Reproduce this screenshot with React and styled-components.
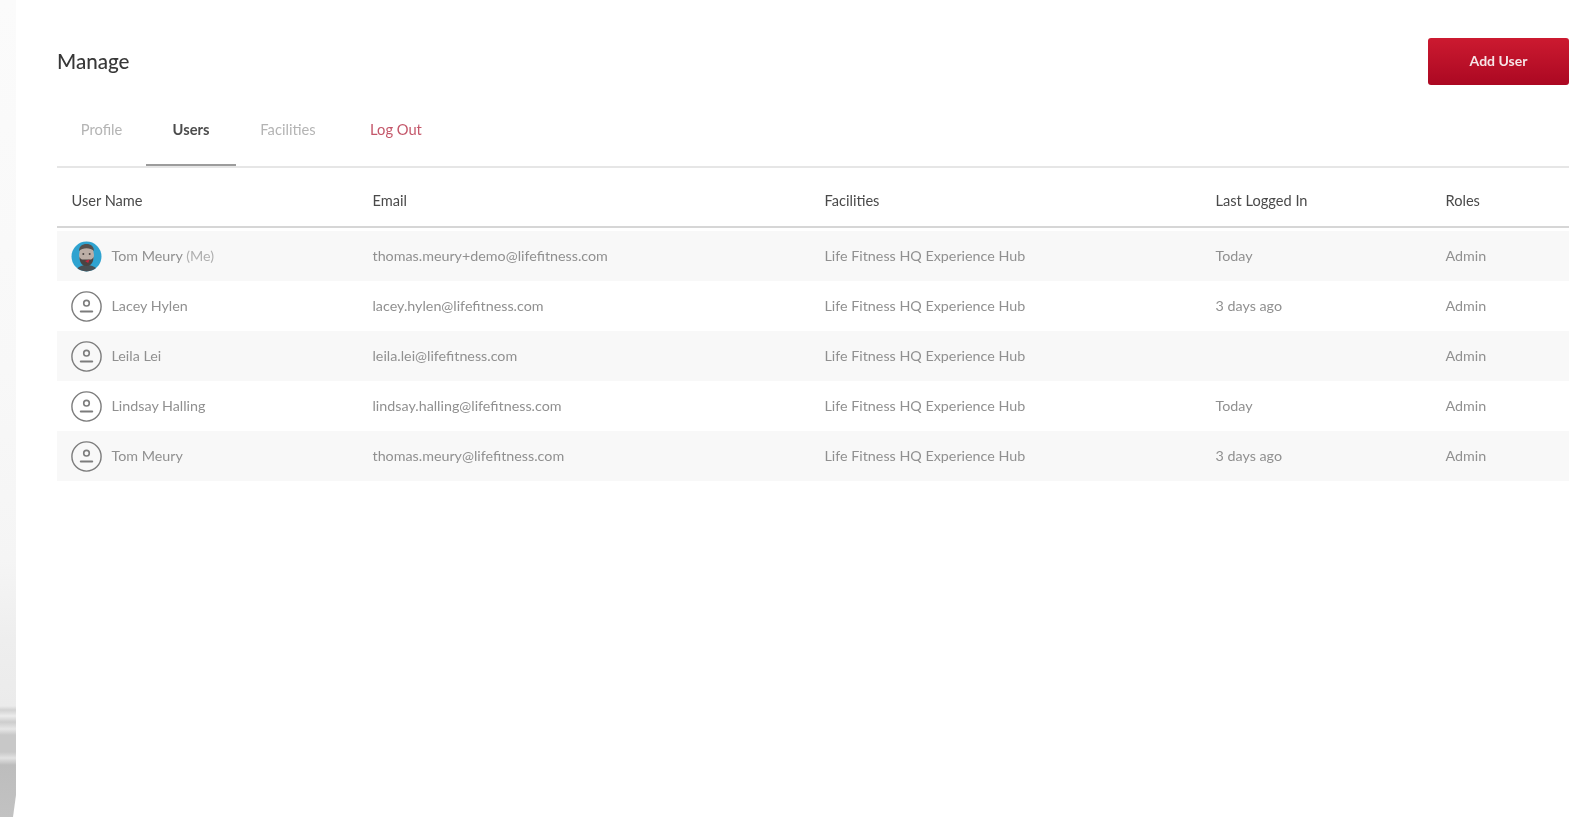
import React from "react"
import styled, { createGlobalStyle } from "styled-components"

const Global = createGlobalStyle`
    html, body {
        margin: 0;
        padding: 0;
        background: #fff;
        font-family: "Lato", "Open Sans", sans-serif;
    }
`;

const Page = styled.div`
    display: flex;
    min-height: 817px;
    overflow: hidden;
`;

const SideStrip = styled.aside`
    width: 16px;
    flex: none;
    clip-path: polygon(0 0, 100% 0, 100% 795px, 13px 817px, 0 817px);
    background: linear-gradient(
        to bottom,
        #fbfbfb 0,
        #f8f8f8 370px,
        #f5f5f5 560px,
        #eeeeee 640px,
        #ebebeb 706px,
        #d2d2d2 710px,
        #ececec 716px,
        #cdcdcd 722px,
        #e6e6e6 729px,
        #c8c8c8 735px,
        #c8c8c8 752px,
        #e2e2e2 758px,
        #bdbdbd 765px,
        #c2c2c2 817px
    );
`;

const Main = styled.main`
    flex: 1;
    padding: 38px 13px 0 41px;
    filter: blur(0.55px);
`;

const TopBar = styled.header`
    display: flex;
    justify-content: space-between;
    align-items: center;
`;

const Title = styled.h1`
    margin: 0 0 2px;
    font-size: 20.6px;
    font-weight: 500;
    color: #383838;
`;

const AddButton = styled.button`
    width: 141px;
    height: 47px;
    padding-bottom: 4px;
    border: 0;
    border-radius: 3px;
    background: linear-gradient(to bottom, #cc1a30, #ab0822);
    color: #f6e4e6;
    font: 700 14px "Lato", sans-serif;
`;

const Tabs = styled.nav`
    display: flex;
    height: 58px;
    margin-top: 23px;
    border-bottom: 2px solid #e6e6e6;
`;

const Tab = styled.a`
    display: flex;
    align-items: center;
    justify-content: center;
    width: ${(p) => p.$width}px;
    height: 58px;
    padding-bottom: 14px;
    box-sizing: border-box;
    font-size: 14.7px;
    font-weight: ${(p) => (p.$active ? 700 : 400)};
    color: ${(p) => (p.$danger ? "#c4576a" : p.$active ? "#4c4c4c" : "#b4b4b4")};
    border-bottom: 2px solid ${(p) => (p.$active ? "#9c9c9c" : "transparent")};
`;

const Table = styled.table`
    width: 100%;
    border-collapse: collapse;
    table-layout: fixed;
`;

const HeadRow = styled.tr`
    height: 59px;
    border-bottom: 2px solid #d6d6d6;
`;

const HeadCell = styled.th`
    box-sizing: border-box;
    padding: 6px 0 0 14.5px;
    text-align: left;
    font-size: 14.6px;
    font-weight: 400;
    color: #4a4a4a;
    width: ${(p) => (p.$width ? `${p.$width}px` : "auto")};
`;

const Spacer = styled.tr`
    height: 4px;
`;

const Row = styled.tr`
    height: 50px;
    background: ${(p) => (p.$shaded ? "#f8f8f8" : "#fff")};
`;

const Cell = styled.td`
    padding: 0 0 2px 14.5px;
    font-size: 14.3px;
    color: #909090;
    white-space: nowrap;
`;

const UserCell = styled.div`
    display: flex;
    align-items: center;
    gap: 10px;

    svg {
        margin: 2px 0 0 -1px;
    }
`;

const Muted = styled.span`
    color: #b0b0b0;
`;

function UserIcon() {
    return (
        <svg width="31" height="31" viewBox="0 0 31 31" fill="none" stroke="#7c7c7c" strokeWidth="1.4" strokeLinecap="round">
            <circle cx="15.5" cy="15.5" r="14.6" />
            <circle cx="15.5" cy="12.2" r="2.8" strokeWidth="1.6" />
            <path d="M9.8 20.6h11.400" strokeWidth="2" />
        </svg>
    );
}

function PhotoAvatar() {
    return (
        <svg width="31" height="31" viewBox="0 0 31 31">
            <defs>
                <clipPath id="avatar-clip">
                    <circle cx="15.5" cy="15.5" r="15" />
                </clipPath>
            </defs>
            <circle cx="15.5" cy="15.5" r="15" fill="#2fa3d0" />
            <g clipPath="url(#avatar-clip)">
                <path d="M5 31c1-5 5-7 10.500-7S26 26 27 31z" fill="#4a5054" />
                <ellipse cx="15.500" cy="14" rx="7.500" ry="10" fill="#bcaea6" />
                <path d="M8 10c0-4.500 3.200-7 7.500-7s7.500 2.500 7.500 7c-2-2-4.500-2.800-7.500-2.800S10 8 8 10z" fill="#55504e" />
                <path d="M8.500 16c1 2 2 2.500 3.500 2.500h7c1.500 0 2.500-.5 3.500-2.500 0 6-3 9-7 9s-7-3-7-9z" fill="#4a4442" />
                <path d="M14 20l4.500-1.500-1.300 3.500z" fill="#c4283e" />
                <circle cx="12.300" cy="13" r="1" fill="#4a4442" />
                <circle cx="18.700" cy="13" r="1" fill="#4a4442" />
            </g>
        </svg>
    );
}

const hub = "Life Fitness HQ Experience Hub";

const users = [
    { name: "Tom Meury", me: true, email: "thomas.meury+demo@lifefitness.com", last: "Today" },
    { name: "Lacey Hylen", email: "lacey.hylen@lifefitness.com", last: "3 days ago" },
    { name: "Leila Lei", email: "leila.lei@lifefitness.com", last: "" },
    { name: "Lindsay Halling", email: "lindsay.halling@lifefitness.com", last: "Today" },
    { name: "Tom Meury", email: "thomas.meury@lifefitness.com", last: "3 days ago" },
];

export default function App() {
    return (
        <Page>
            <Global />
            <SideStrip />
            <Main>
                <TopBar>
                    <Title>Manage</Title>
                    <AddButton>Add User</AddButton>
                </TopBar>
                <Tabs>
                    <Tab $width={89}>Profile</Tab>
                    <Tab $width={90} $active>Users</Tab>
                    <Tab $width={104}>Facilities</Tab>
                    <Tab $width={112} $danger>Log Out</Tab>
                </Tabs>
                <Table>
                    <thead>
                        <HeadRow>
                            <HeadCell $width={301}>User Name</HeadCell>
                            <HeadCell $width={452}>Email</HeadCell>
                            <HeadCell $width={391}>Facilities</HeadCell>
                            <HeadCell $width={230}>Last Logged In</HeadCell>
                            <HeadCell>Roles</HeadCell>
                        </HeadRow>
                        <Spacer />
                    </thead>
                    <tbody>
                        {users.map((u, i) => (
                            <Row key={u.email} $shaded={i % 2 === 0}>
                                <Cell>
                                    <UserCell>
                                        {u.me ? <PhotoAvatar /> : <UserIcon />}
                                        <span>
                                            {u.name}
                                            {u.me && <Muted> (Me)</Muted>}
                                        </span>
                                    </UserCell>
                                </Cell>
                                <Cell>{u.email}</Cell>
                                <Cell>{hub}</Cell>
                                <Cell>{u.last}</Cell>
                                <Cell>Admin</Cell>
                            </Row>
                        ))}
                    </tbody>
                </Table>
            </Main>
        </Page>
    )
}
